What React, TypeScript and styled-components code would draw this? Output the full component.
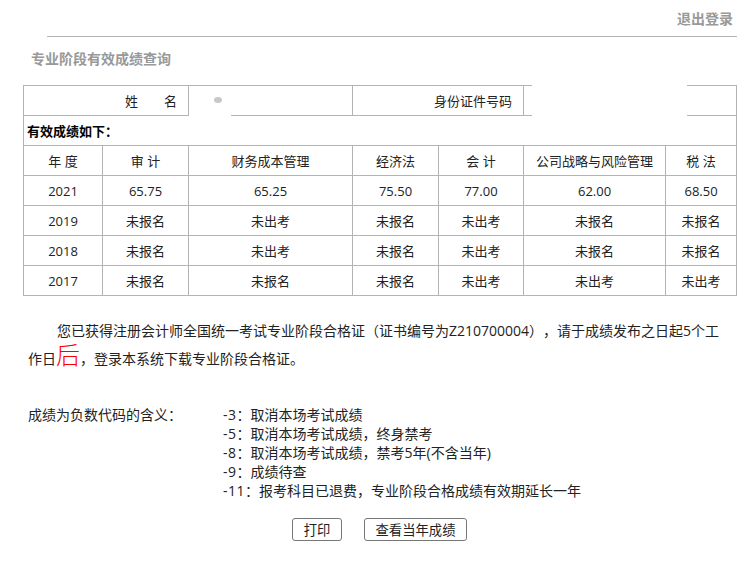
import React from "react";
import styled, { createGlobalStyle } from "styled-components";

const Global = createGlobalStyle`
  html, body { margin: 0; padding: 0; background: #fff; }
  body {
    font-family: "Open Sans", "Noto Sans CJK SC", sans-serif;
    font-size: 14px;
    color: #222;
    text-spacing-trim: space-all;
  }
`;

const Page = styled.div`
  width: 754px;
  height: 585px;
  overflow: hidden;
  position: relative;
`;

const TopBar = styled.div`
  margin-left: 47px;
  width: 690px;
  height: 37px;
  box-sizing: border-box;
  border-bottom: 1px solid #b4b4b4;
  padding: 9px 4px 0 0;
  display: flex;
  justify-content: flex-end;
  line-height: 20px;
`;

const Logout = styled.a`
  font-weight: 700;
  color: #999;
  font-size: 14px;
`;

const Title = styled.h1`
  margin: 0;
  padding: 12px 0 0 31px;
  height: 48px;
  box-sizing: border-box;
  font-size: 14px;
  line-height: 20px;
  font-weight: 700;
  color: #999;
`;

const TableWrap = styled.div`
  position: relative;
  margin-left: 23px;
  width: 714px;
`;

const Grid = styled.table`
  border-collapse: collapse;
  table-layout: fixed;
  width: 714px;
  color: #222;
`;

const Cell = styled.td`
  height: 29px;
  padding: 0;
  border: 1px solid #b4b4b4;
  text-align: center;
  line-height: 20px;
  font-size: 13px;
  white-space: nowrap;
`;

const NameLabel = styled(Cell)`
  padding-left: 101px;
  text-align: left;
  word-spacing: 22.6px;
`;

const IdLabel = styled(Cell)`
  text-align: right;
  padding-right: 11px;
`;

const Section = styled(Cell)`
  text-align: left;
  padding-left: 3px;
  font-weight: 700;
  color: #000;
`;

const Mask = styled.div<{ $l: number; $t: number; $w: number; $h: number }>`
  position: absolute;
  left: ${(p) => p.$l}px;
  top: ${(p) => p.$t}px;
  width: ${(p) => p.$w}px;
  height: ${(p) => p.$h}px;
  background: #fff;
`;

const Blob = styled.div`
  position: absolute;
  left: 191px;
  top: 12px;
  width: 8px;
  height: 6px;
  border-radius: 50%;
  background: #c8c8c8;
`;

const Notice = styled.p`
  margin: 21px 0 0 28px;
  width: 696px;
  text-indent: 29px;
  line-height: 28px;
  color: #222;
`;

const Big = styled.span`
  color: #f00;
  font-size: 24px;
  font-weight: 300;
  line-height: 20px;
`;

const Legend = styled.div`
  margin: 32px 0 0 28px;
  display: grid;
  grid-template-columns: 195px 1fr;
  line-height: 19px;
`;

const Codes = styled.ul`
  margin: 0;
  padding: 0;
  list-style: none;
`;

const CodeNum = styled.span`
  letter-spacing: 0.5px;
`;

const Actions = styled.div`
  margin-top: 18px;
  padding-left: 292px;
  display: flex;
  gap: 22px;
`;

const Btn = styled.button<{ $w: number }>`
  width: ${(p) => p.$w}px;
  height: 23px;
  padding: 0;
  box-sizing: border-box;
  background: #fff;
  border: 1px solid #777;
  border-radius: 3px;
  font: inherit;
  font-size: 13.33px;
  line-height: 20px;
  color: #222;
`;

const headers = ["年 度", "审 计", "财务成本管理", "经济法", "会 计", "公司战略与风险管理", "税 法"];
const rows = [
  ["2021", "65.75", "65.25", "75.50", "77.00", "62.00", "68.50"],
  ["2019", "未报名", "未出考", "未报名", "未出考", "未报名", "未报名"],
  ["2018", "未报名", "未出考", "未报名", "未出考", "未报名", "未报名"],
  ["2017", "未报名", "未报名", "未报名", "未出考", "未出考", "未出考"],
];
const widths = [79, 86, 164, 86, 85, 142, 71];
const codes = [
  ["-3", "：取消本场考试成绩"],
  ["-5", "：取消本场考试成绩，终身禁考"],
  ["-8", "：取消本场考试成绩，禁考5年(不含当年)"],
  ["-9", "：成绩待查"],
  ["-11", "：报考科目已退费，专业阶段合格成绩有效期延长一年"],
];

export default function App() {
  return (
    <Page>
      <Global />
      <TopBar>
        <Logout>退出登录</Logout>
      </TopBar>
      <Title>专业阶段有效成绩查询</Title>
      <TableWrap>
        <Grid>
          <colgroup>
            {widths.map((w, i) => (
              <col key={i} style={{ width: w }} />
            ))}
          </colgroup>
          <tbody>
            <tr>
              <NameLabel colSpan={2}>姓 名</NameLabel>
              <Cell />
              <IdLabel colSpan={2}>身份证件号码</IdLabel>
              <Cell colSpan={2} />
            </tr>
            <tr>
              <Section colSpan={7}>有效成绩如下：</Section>
            </tr>
            <tr>
              {headers.map((h) => (
                <Cell key={h}>{h}</Cell>
              ))}
            </tr>
            {rows.map((r) => (
              <tr key={r[0]}>
                {r.map((c, i) => (
                  <Cell key={i}>{c}</Cell>
                ))}
              </tr>
            ))}
          </tbody>
        </Grid>
        <Mask $l={166} $t={20} $w={42} $h={12} />
        <Blob />
        <Mask $l={509} $t={0} $w={155} $h={32} />
      </TableWrap>
      <Notice>
        您已获得注册会计师全国统一考试专业阶段合格证（证书编号为Z210700004），请于成绩发布之日起5个工
        <br />
        作日<Big>后</Big>，登录本系统下载专业阶段合格证。
      </Notice>
      <Legend>
        <span>成绩为负数代码的含义：</span>
        <Codes>
          {codes.map(([n, t]) => (
            <li key={n}>
              <CodeNum>{n}</CodeNum>
              {t}
            </li>
          ))}
        </Codes>
      </Legend>
      <Actions>
        <Btn $w={50}>打印</Btn>
        <Btn $w={103}>查看当年成绩</Btn>
      </Actions>
    </Page>
  );
}
